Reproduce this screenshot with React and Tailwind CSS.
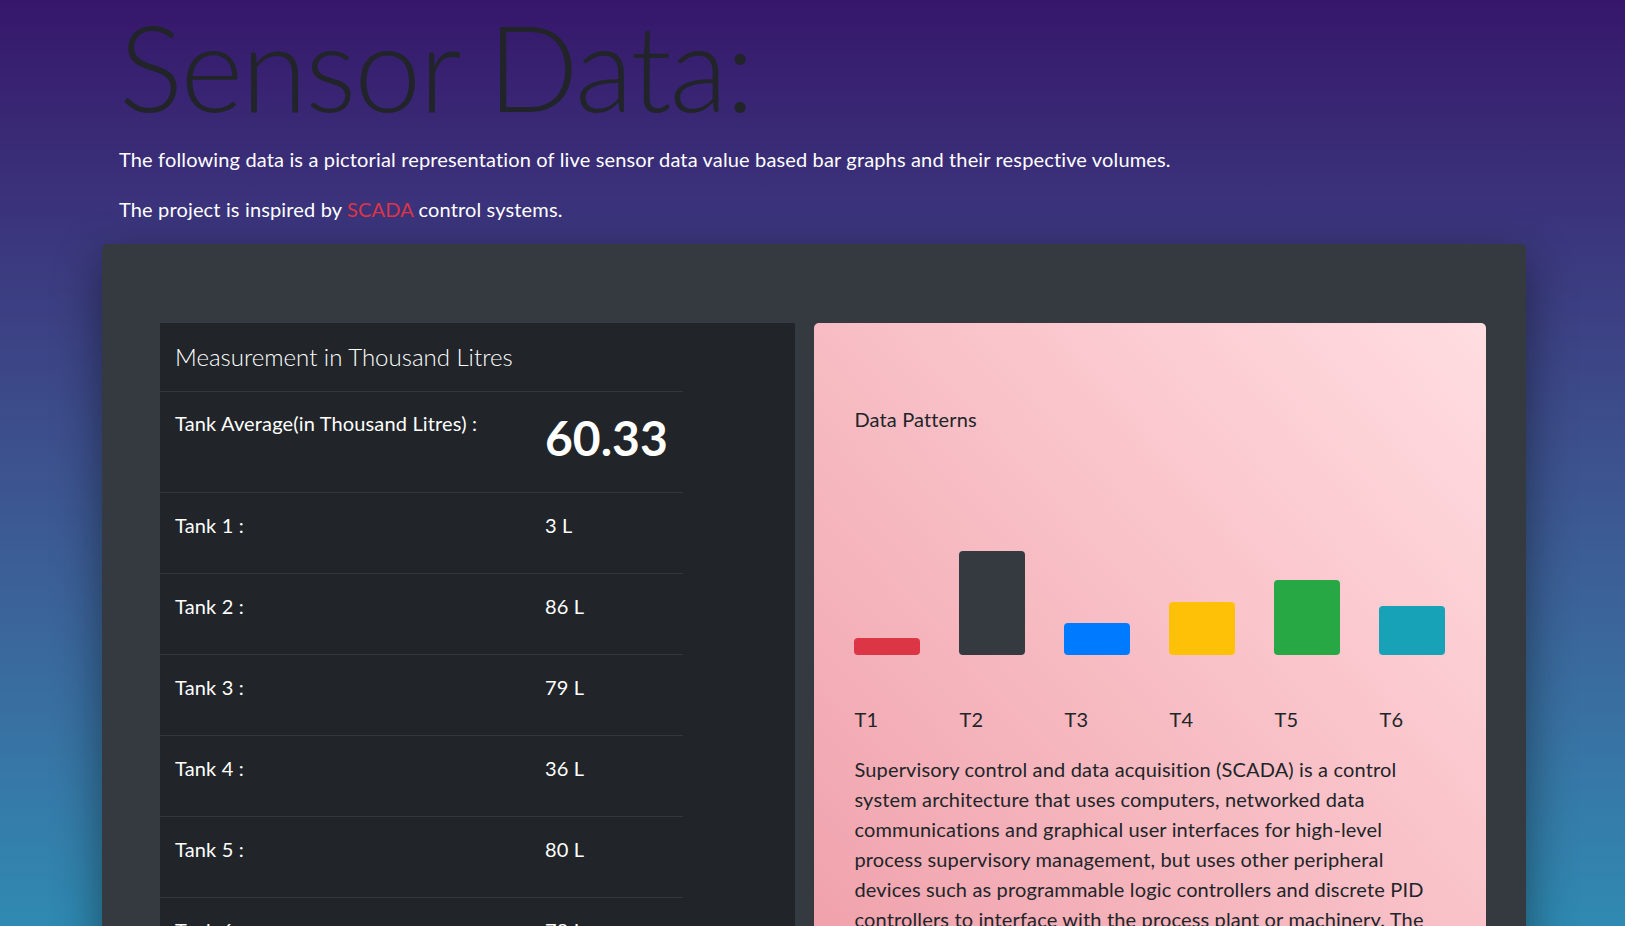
import React from 'react';

const tanks = [
    { name: 'Tank 1', value: 3 },
    { name: 'Tank 2', value: 86 },
    { name: 'Tank 3', value: 79 },
    { name: 'Tank 4', value: 36 },
    { name: 'Tank 5', value: 80 },
    { name: 'Tank 6', value: 78 },
];

// bar heights are pixel sizes taken from the graph, not the tank values
const bars = [
    { label: 'T1', color: 'bg-[#dc3545]', h: 'h-[17px]' },
    { label: 'T2', color: 'bg-[#343a40]', h: 'h-[104px]' },
    { label: 'T3', color: 'bg-[#007bff]', h: 'h-[32px]' },
    { label: 'T4', color: 'bg-[#ffc107]', h: 'h-[53px]' },
    { label: 'T5', color: 'bg-[#28a745]', h: 'h-[75px]' },
    { label: 'T6', color: 'bg-[#17a2b8]', h: 'h-[49px]' },
];

const App = () => {
    const average = (tanks.reduce((s, t) => s + t.value, 0) / tanks.length).toFixed(2);

    return (
        <div className="min-h-screen bg-linear-to-b from-[#36166b] to-[#2e8ab2] bg-fixed font-['Lato','Open_Sans',sans-serif] text-[20px] leading-[30px] tracking-[0.15px] overflow-hidden">
            <div className="ml-[100px] w-[1425px]">
                <div className="px-[19px]">
                    <h1 className="mb-[12px] text-[120px] leading-[132px] font-light text-[#212529] tracking-[-2px]">Sensor Data:</h1>
                    <p className="text-white mb-[20px]">
                        The following data is a pictorial representation of live sensor data value based bar graphs and their respective volumes.
                    </p>
                    <p className="text-white mb-[20px]">
                        The project is inspired by <span className="text-[#dc3545]">SCADA</span> control systems.
                    </p>
                </div>

                {/* Dark card */}
                <div className="ml-[2px] w-[1424px] bg-[#343a40] rounded-[5px] shadow-[0_16px_48px_rgba(0,0,0,0.45)] pt-[79px] pl-[58px] pr-[40px] pb-[40px] flex gap-[19px]">
                    {/* Table column */}
                    <div className="w-[636px] bg-[#212529] text-white">
                        <div className="w-[523px]">
                            <div className="h-[69px] px-[15px] flex items-center border-b border-[#32383e]">
                                <span className="text-[24px] font-light tracking-normal">Measurement in Thousand Litres</span>
                            </div>
                            <div className="h-[101px] flex border-b border-[#32383e]">
                                <div className="w-[370px] px-[15px] pt-[16px]">Tank Average(in Thousand Litres) :</div>
                                <div className="px-[15px] pt-[16px] text-[48px] leading-[60px] font-bold tracking-normal">{average}</div>
                            </div>
                            {tanks.map((t) => (
                                <div key={t.name} className="h-[81px] flex border-b border-[#32383e]">
                                    <div className="w-[370px] px-[15px] pt-[17px]">{t.name} :</div>
                                    <div className="px-[15px] pt-[17px]">{t.value} L</div>
                                </div>
                            ))}
                        </div>
                    </div>

                    {/* Graph card */}
                    <div className="w-[672px] rounded-[5px] bg-linear-to-tr from-[#ee9ca7] to-[#ffdde1] px-[40px] pt-[81px] pb-[40px] text-[#212529]">
                        <p>Data Patterns</p>
                        <div className="h-[221px] flex items-end gap-[39px]">
                            {bars.map((b) => (
                                <div key={b.label} className={`w-[66px] rounded-[4px] ${b.color} ${b.h}`}></div>
                            ))}
                        </div>
                        <div className="mt-[49px] mb-[20px] flex gap-[39px]">
                            {bars.map((b) => (
                                <span key={b.label} className="w-[66px]">{b.label}</span>
                            ))}
                        </div>
                        <p>
                            Supervisory control and data acquisition (SCADA) is a control system architecture that uses computers, networked data communications and graphical user interfaces for high-level process supervisory management, but uses other peripheral devices such as programmable logic controllers and discrete PID controllers to interface with the process plant or machinery. The operator interfaces which enable monitoring and the issuing of process commands, like controller set point changes, are handled through the SCADA computer system.
                        </p>
                    </div>
                </div>
            </div>
        </div>
    );
};

export default App;
